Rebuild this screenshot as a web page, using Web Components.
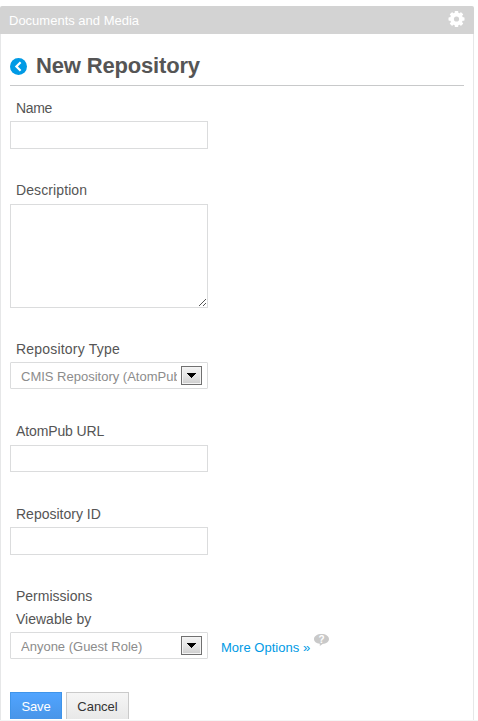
<!DOCTYPE html>
<html lang="en">
<head>
<meta charset="utf-8">
<title>New Repository</title>
<style>
html, body { margin: 0; height: 100%; overflow: hidden; background: #fff; }
body { font-family: "Liberation Sans", Arial, sans-serif; font-size: 14px; line-height: 20px; color: #555; }
</style>
</head>
<body>
<repository-page></repository-page>
<script>
function define(name, html) {
  const template = document.createElement('template');
  template.innerHTML = '<style>*{box-sizing:border-box}</style>' + html;
  customElements.define(name, class extends HTMLElement {
    constructor() {
      super();
      this.attachShadow({ mode: 'open' }).append(template.content.cloneNode(true));
    }
  });
}

define('portlet-bar', `
<style>
:host { display: flex; justify-content: space-between; align-items: flex-start; box-sizing: border-box; height: 28px; width: 474px; padding: 0 9px; background: #d3d3d3; color: #fff; border-radius: 2px 2px 0 0; font-size: 13px; line-height: 29px; }
svg { display: block; margin-top: 5px; }
</style>
<span><slot></slot></span>
<svg width="17" height="16" viewBox="0 0 17 16"><g fill="#fff"><g><rect x="6.7" y="0" width="3.6" height="16" rx=".7"/><rect x="6.7" y="0" width="3.6" height="16" rx=".7" transform="rotate(45 8.5 8)"/><rect x="6.7" y="0" width="3.6" height="16" rx=".7" transform="rotate(90 8.5 8)"/><rect x="6.7" y="0" width="3.6" height="16" rx=".7" transform="rotate(135 8.5 8)"/></g><circle cx="8.5" cy="8" r="6.4"/></g><circle cx="8.5" cy="8" r="2.6" fill="#d3d3d3"/></svg>`);

define('page-heading', `
<style>
:host { display: flex; box-sizing: border-box; height: 41px; border-bottom: 1px solid #c8c9ca; gap: 9px; }
svg { flex: none; margin-top: 13px; }
h1 { margin: 0; font-size: 22px; line-height: 41px; font-weight: bold; color: #555; letter-spacing: -.17px; }
</style>
<svg width="17" height="17" viewBox="0 0 17 17"><circle cx="8.5" cy="8.5" r="8.5" fill="#009ae5"/><path d="M10.6 4.3 6.4 8.5l4.2 4.2" fill="none" stroke="#fff" stroke-width="2.2"/></svg>
<h1><slot></slot></h1>`);

define('form-field', `
<style>
:host { display: flex; flex-direction: column; gap: 3px; }
.label { height: 20px; padding-left: 6px; white-space: nowrap; }
</style>
<div class="label"><slot name="label"></slot></div>
<slot></slot>`);

define('text-box', `
<style>
:host { display: block; box-sizing: border-box; width: 198px; height: 28px; border: 1px solid #dbdcdd; background: #fff; }
:host([short]) { height: 27px; }
</style>`);

define('text-area', `
<style>
:host { display: flex; justify-content: flex-end; align-items: flex-end; box-sizing: border-box; width: 198px; height: 104px; margin-top: 1px; border: 1px solid #dbdcdd; padding: 0 1px 1px 0; }
</style>
<svg width="7" height="7" viewBox="0 0 7 7" shape-rendering="crispEdges" fill="#555"><path d="M6 0h1v1H6zM5 1h1v1H5zM4 2h1v1H4zM3 3h1v1H3zM2 4h1v1H2zM1 5h1v1H1zM0 6h1v1H0zM6 4h1v1H6zM5 5h1v1H5zM4 6h1v1H4z"/></svg>`);

define('select-box', `
<style>
:host { display: flex; box-sizing: border-box; width: 198px; height: 27px; border: 1px solid #dbdcdd; border-radius: 1px; padding: 3px 5px 3px 10px; color: #8c8c8c; font-size: 14px; }
.value { width: 156px; height: 20px; line-height: 21px; overflow: hidden; white-space: nowrap; font-size: 13px; }
.arrow { flex: none; width: 21px; height: 19px; margin-left: 4px; border: 1px solid #707070; box-shadow: inset 0 0 0 1px #f4f4f4; background: linear-gradient(#f2f2f2, #e6e6e6 50%, #cdcdcd); display: flex; justify-content: center; align-items: center; }
</style>
<div class="value"><slot></slot></div>
<div class="arrow"><svg width="9" height="5" viewBox="0 0 9 5" shape-rendering="crispEdges"><path d="M0 0h9v1H8v1H7v1H6v1H5v1H4V4H3V3H2V2H1V1H0z"/></svg></div>`);

define('help-bubble', `
<style>
:host { display: block; width: 16px; height: 14px; }
svg { display: block; }
text { font: bold 10px "Liberation Sans", Arial, sans-serif; fill: #fff; }
</style>
<svg width="16" height="14" viewBox="0 0 16 14"><path d="M7.5 0C11.8 0 15 2.1 15 5c0 2.8-2.8 4.8-6.4 5L5.8 12v-2.2C2.3 9.4 0 7.5 0 5 0 2.1 3.2 0 7.5 0z" fill="#c9c9c9"/><text x="7.6" y="8.7" text-anchor="middle">?</text></svg>`);

define('action-button', `
<style>
:host { display: block; box-sizing: border-box; width: 63px; height: 27px; border: 1px solid #cacaca; border-bottom: 0; background: linear-gradient(#f5f5f5, #e8e8e8); color: #333; text-align: center; font-size: 13px; line-height: 28px; }
:host([primary]) { width: 52px; border-color: #3f94e9; background: linear-gradient(#50a4ff, #4995e8); color: #fff; letter-spacing: -.2px; }
</style>
<slot></slot>`);

define('repository-page', `
<style>
:host { display: block; height: 721px; padding-top: 6px; box-sizing: border-box; }
.body { width: 474px; height: 686px; border: solid #e6e7e8; border-width: 0 1px; padding: 11px 9px 0; }
.panel { border-bottom: 1px solid #f5f5f5; width: 478px; height: 715px; overflow: hidden; }
.fields { display: flex; flex-direction: column; padding-top: 12px; }
.fields > form-field:nth-child(1), .fields > form-field:nth-child(2), .fields > form-field:nth-child(5) { margin-bottom: 31px; }
.fields > form-field:nth-child(3), .fields > form-field:nth-child(4) { margin-bottom: 32px; }
.fields > form-field:nth-child(4) text-box { margin-top: 1px; }
.name { letter-spacing: -.35px; }
.description { letter-spacing: .1px; }
.type { letter-spacing: .2px; }
.url { letter-spacing: -.12px; }
.group { height: 23px; padding-left: 6px; }
.row { display: flex; }
.more { margin: 6px 0 0 13px; font-size: 13px; letter-spacing: .02px; color: #009ae5; text-decoration: none; white-space: nowrap; }
.row help-bubble { margin: 2px 0 0 4px; }
.actions { display: flex; gap: 4px; margin-top: 33px; }
</style>
<div class="panel">
<portlet-bar>Documents and Media</portlet-bar>
<div class="body">
<page-heading>New Repository</page-heading>
<div class="fields">
<form-field><span class="name" slot="label">Name</span><text-box></text-box></form-field>
<form-field><span class="description" slot="label">Description</span><text-area></text-area></form-field>
<form-field><span class="type" slot="label">Repository Type</span><select-box>CMIS Repository (AtomPub)</select-box></form-field>
<form-field><span class="url" slot="label">AtomPub URL</span><text-box short></text-box></form-field>
<form-field><span slot="label">Repository ID</span><text-box></text-box></form-field>
<div class="group">Permissions</div>
<form-field><span slot="label">Viewable by</span><div class="row"><select-box>Anyone (Guest Role)</select-box><a class="more">More Options »</a><help-bubble></help-bubble></div></form-field>
</div>
<div class="actions"><action-button primary>Save</action-button><action-button>Cancel</action-button></div>
</div>
</div>`);
</script>
</body>
</html>
